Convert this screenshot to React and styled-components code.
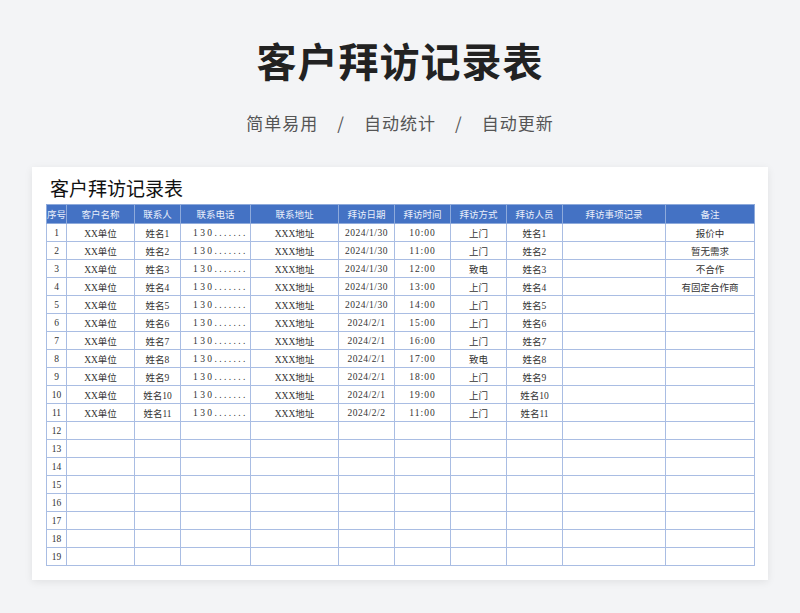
import React from 'react';
import styled, { createGlobalStyle } from 'styled-components';

const G = createGlobalStyle`
  body { margin:0; background:#f3f4f6; font-family:"Noto Sans CJK SC", sans-serif; }
`;
const Page = styled.div`width:800px;height:613px;display:flex;flex-direction:column;align-items:center;`;
const H1 = styled.h1`margin:36px 0 0;font-size:40px;line-height:48px;font-weight:700;color:#222;letter-spacing:1px;`;
const Sub = styled.div`margin-top:27px;font-size:17px;line-height:24px;color:#555;display:flex;gap:19px;letter-spacing:1px;`;
const Card = styled.div`margin-top:32px;width:736px;height:413px;background:#fff;box-shadow:0 2px 8px rgba(0,0,0,.08);box-sizing:border-box;padding:8px 14px 0 14px;`;
const T = styled.div`font-family:"Liberation Serif","Noto Sans CJK SC",serif;font-size:19px;line-height:29px;color:#111;padding-left:4px;`;
const Table = styled.table`border-collapse:collapse;table-layout:fixed;width:708px;font-family:"Liberation Serif","Noto Sans CJK SC",serif;font-size:9.5px;color:#333;`;
const Th = styled.th`background:#4472c4;color:#e8eefa;font-weight:400;height:18px;padding:0;border:1px solid #8eaadb;`;
const Td = styled.td`height:17px;padding:0;border:1px solid #a9bde3;text-align:center;white-space:nowrap;overflow:hidden;letter-spacing:${p=>p.$sp||0}px;text-align:${p=>p.$left?'left':'center'};padding-left:${p=>p.$left?12:0}px;`;
const widths=[20,68,46,70,88,56,56,56,56,103,89];
const heads=['序号','客户名称','联系人','联系电话','联系地址','拜访日期','拜访时间','拜访方式','拜访人员','拜访事项记录','备注'];
const times=['10:00','11:00','12:00','13:00','14:00','15:00','16:00','17:00','18:00','19:00','11:00'];
const dates=['2024/1/30','2024/1/30','2024/1/30','2024/1/30','2024/1/30','2024/2/1','2024/2/1','2024/2/1','2024/2/1','2024/2/1','2024/2/2'];
const ways=['上门','上门','致电','上门','上门','上门','上门','致电','上门','上门','上门'];
const notes=['报价中','暂无需求','不合作','有固定合作商'];
export default function App(){
  const rows=[];
  for(let i=1;i<=19;i++){
    const d=i<=11;
    rows.push(<tr key={i}>
      <Td>{i}</Td><Td>{d?'XX单位':''}</Td><Td>{d?'姓名'+i:''}</Td>
      <Td $left $sp={2.4}>{d?'130.......':''}</Td>
      <Td>{d?'XXX地址':''}</Td><Td $sp={0.5}>{d?dates[i-1]:''}</Td><Td $sp={1}>{d?times[i-1]:''}</Td>
      <Td>{d?ways[i-1]:''}</Td><Td>{d?'姓名'+i:''}</Td><Td></Td><Td>{notes[i-1]||''}</Td>
    </tr>);
  }
  return <Page><G/>
    <H1>客户拜访记录表</H1>
    <Sub><span>简单易用</span><span>/</span><span>自动统计</span><span>/</span><span>自动更新</span></Sub>
    <Card>
      <T>客户拜访记录表</T>
      <Table>
        <colgroup>{widths.map((w,i)=><col key={i} style={{width:w}}/>)}</colgroup>
        <thead><tr>{heads.map(h=><Th key={h}>{h}</Th>)}</tr></thead>
        <tbody>{rows}</tbody>
      </Table>
    </Card>
  </Page>;
}
